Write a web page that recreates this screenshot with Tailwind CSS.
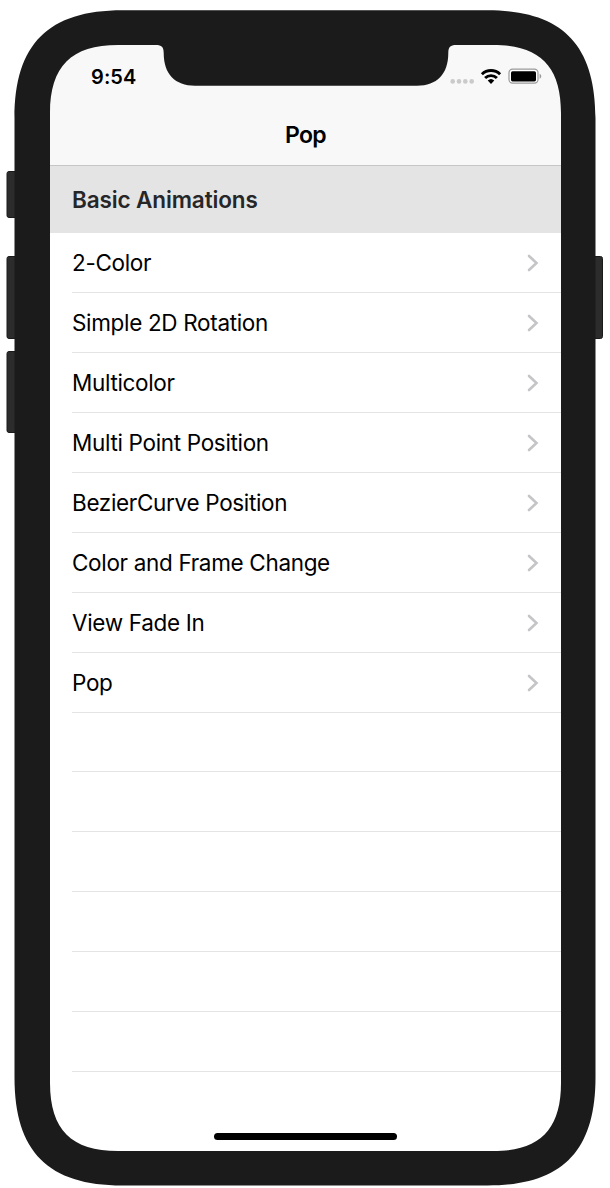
<!DOCTYPE html>
<html lang="en">
<head>
<meta charset="utf-8">
<title>Pop</title>
<script src="https://cdn.jsdelivr.net/npm/@tailwindcss/browser@4"></script>
</head>
<body class="bg-white">
<div class="relative w-[610px] h-[1188px] overflow-hidden pl-[50px] pt-[45px] font-['Inter',sans-serif] text-black">
  <main class="w-[511px] h-[1106px] bg-white flex flex-col">
    <header class="h-[121px] shrink-0 bg-[#f8f8f8] border-b border-[#c6c6c6] flex flex-col">
      <div class="h-[60px] pt-[16px] pl-[41px] pr-[19px] flex justify-between">
        <span class="text-[20px] leading-[32px] font-semibold tracking-[0.1px]">9:54</span>
        <svg class="w-[94px] h-[30px]" viewBox="448 61 94 30">
          <g fill="#cacaca"><circle cx="452.7" cy="81.4" r="2.3"/><circle cx="459" cy="81.4" r="2.3"/><circle cx="465.3" cy="81.4" r="2.3"/><circle cx="471.7" cy="81.4" r="2.3"/></g>
          <g fill="none" stroke="#000" stroke-width="2.9"><path d="M481.900 74.200a13 13 0 0 1 18.200 0"/><path d="M485.100 78.100a8.300 8.300 0 0 1 11.800 0"/></g>
          <path d="M487.7 80.6a4.8 4.8 0 0 1 6.6 0L491 83.9z"/>
          <rect x="509" y="69.2" width="29" height="14" rx="3.6" fill="#fff" stroke="#999" stroke-width="1.2"/>
          <rect x="511" y="71.2" width="25" height="10.2" rx="1.6"/>
          <path d="M539.6 73.8c2.2.7 2.2 4.2 0 5z" fill="#999"/>
        </svg>
      </div>
      <h1 class="h-[60px] text-center text-[23px] leading-[60px] font-semibold tracking-[-0.6px]">Pop</h1>
    </header>
    <h2 class="h-[67px] shrink-0 bg-[#e4e4e4] pl-[22px] pt-[4px] text-[22.5px] leading-[60px] font-semibold tracking-[-0.12px] text-[#262628]">Basic Animations</h2>
    <ul id="list" class="ml-[22px] flex flex-col text-[22.5px] leading-[58px]"></ul>
    <div class="mt-auto mb-[11px] mx-auto w-[183px] h-[7px] rounded-full bg-black"></div>
  </main>
  <svg class="absolute left-0 top-0 w-[610px] h-[1188px]" viewBox="0 0 610 1188">
    <g fill="#2c2c2c" stroke="#1a1a1a" stroke-width="1">
      <rect x="7" y="171.5" width="12" height="46" rx="2"/>
      <rect x="7" y="256.5" width="12" height="82" rx="2"/>
      <rect x="7" y="351.5" width="12" height="81" rx="2"/>
      <rect x="591" y="256.5" width="11.5" height="82" rx="2"/>
    </g>
    <path id="bezel" fill="#1b1b1b" fill-rule="evenodd"/>
    <path fill="#1b1b1b" d="M156 44V45C161.500 45 163.700 47 163.700 53C163.700 74 175 85.700 195 85.700H417C437 85.700 448.300 74 448.300 53C448.300 47 450.500 45 456 45V44Z"/>
  </svg>
</div>
<script>
  const rows = ["2-Color","Simple 2D Rotation","Multicolor","Multi Point Position","BezierCurve Position","Color and Frame Change","View Fade In","Pop","","","","","",""];
  document.getElementById("list").innerHTML = rows.map((t) =>
    `<li class="h-[59.95px] pt-[2px] border-b border-[#e4e4e4] pr-[22px] flex items-center justify-between"><span class="tracking-[-0.33px]">${t}</span>${t ? '<svg class="w-[12px] h-[18px]" viewBox="0 0 12 18" fill="none" stroke="#c5c5c8" stroke-width="2.6" stroke-linecap="round"><path d="M2 2L9.500 9L2 16"/></svg>' : ''}</li>`).join("");

  // Rectangle whose corners ease into the sides over a distance q.
  function squircle(l, t, r, b, q) {
    const k = .313 * q;
    return `M${l} ${t+q}C${l} ${t+k} ${l+k} ${t} ${l+q} ${t}H${r-q}C${r-k} ${t} ${r} ${t+k} ${r} ${t+q}`
      + `V${b-q}C${r} ${b-k} ${r-k} ${b} ${r-q} ${b}H${l+q}C${l+k} ${b} ${l} ${b-k} ${l} ${b-q}Z`;
  }
  document.getElementById("bezel").setAttribute("d", squircle(14.5, 10.3, 595.5, 1185.500, 108) + squircle(50, 45, 561, 1151, 68));
</script>
</body>
</html>
